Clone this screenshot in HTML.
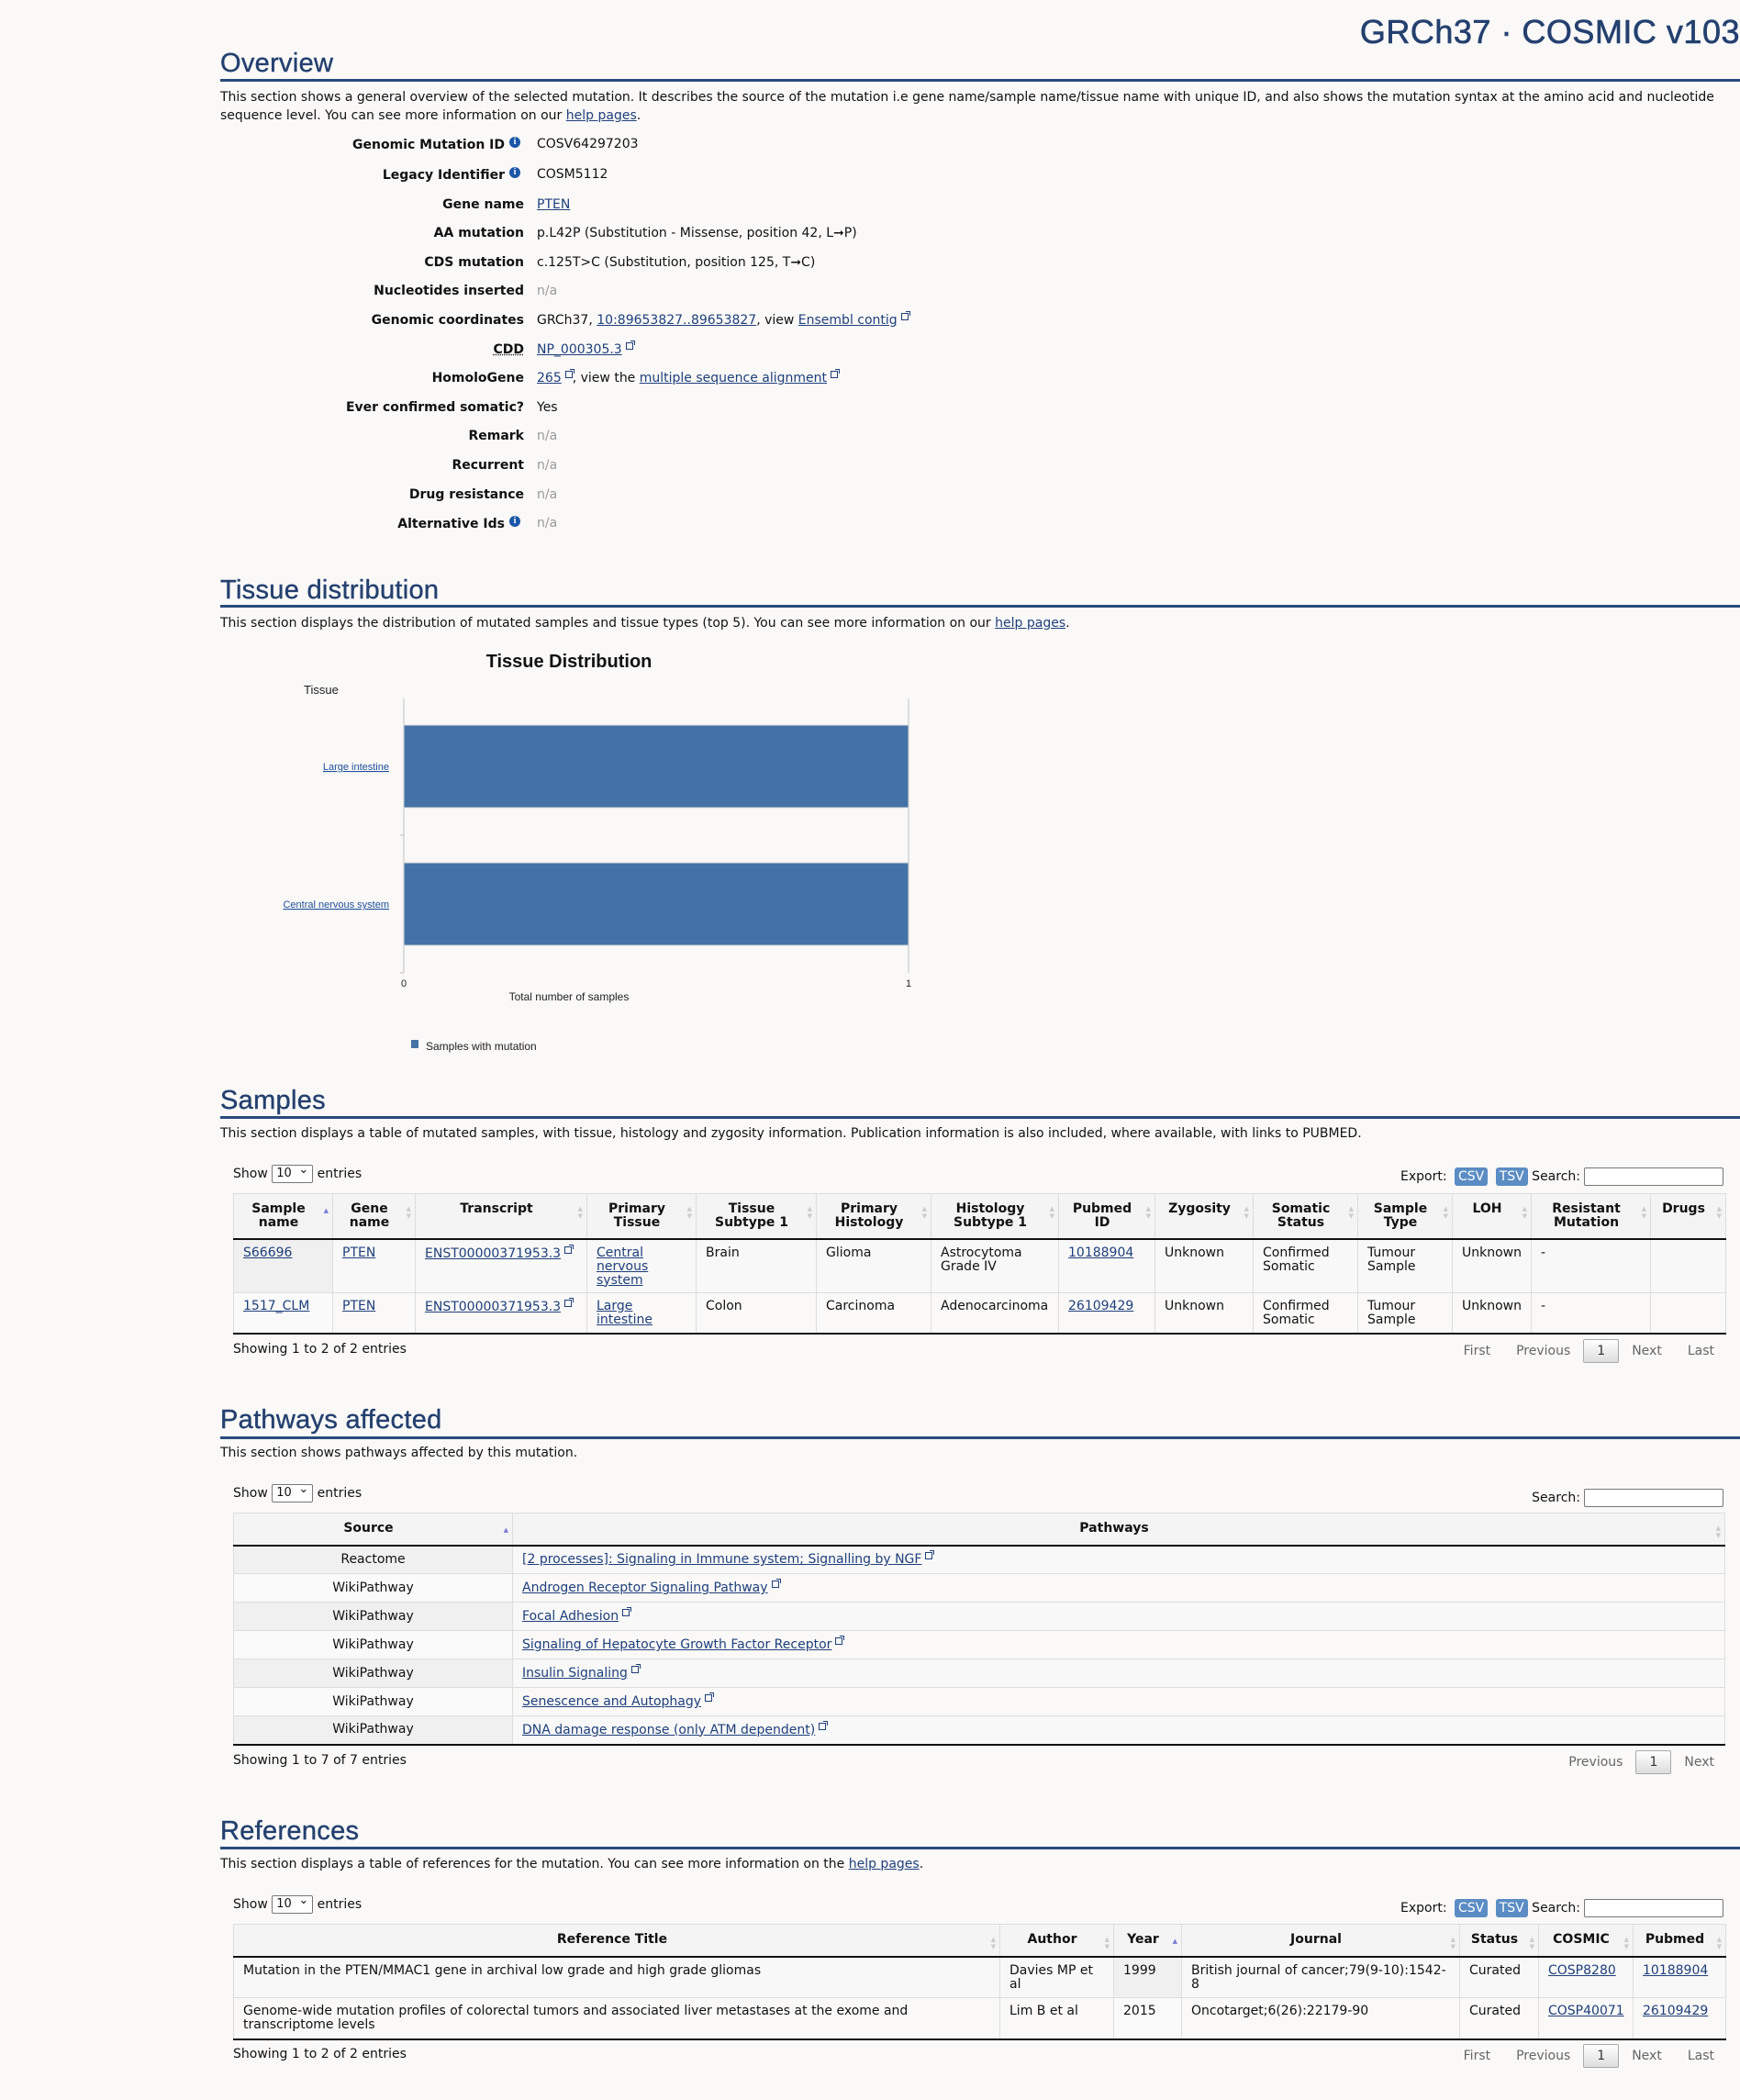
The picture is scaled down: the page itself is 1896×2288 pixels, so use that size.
<!DOCTYPE html>
<html><head><meta charset="utf-8">
<style>
*{box-sizing:border-box}
body{margin:0;width:1896px;height:2288px;background:#faf9f8;font-family:Verdana,"DejaVu Sans",sans-serif;font-size:14px;color:#111;position:relative;overflow:hidden}
.a{position:absolute}
a{color:#1f3f7a;text-decoration:underline}
h2{position:absolute;left:240px;margin:0;font-family:"Liberation Sans",sans-serif;font-weight:normal;font-size:29px;color:#24406f;letter-spacing:0.3px;-webkit-text-stroke:0.4px #24406f}
.rule{position:absolute;left:240px;right:0;height:3px;background:#2a4a7c}
.p{position:absolute;left:240px;width:1645px;line-height:20px}
.lbl{position:absolute;right:1325px;font-weight:bold;text-align:right;white-space:nowrap}
.val{position:absolute;left:585px;white-space:nowrap}
.na{color:#999}
.i{display:inline-block;width:12px;height:12px;border-radius:50%;background:#1a56a8;color:#fff;font-size:10px;line-height:12px;text-align:center;font-weight:bold;vertical-align:5px;margin-left:5px;margin-right:4px;font-family:"Liberation Serif",serif}
.ext{display:inline-block;width:8px;height:8px;border:1.2px solid #1f3f7a;vertical-align:text-top;margin-left:4px;position:relative}
.ext:after{content:"";position:absolute;right:-3px;top:-3px;width:4px;height:4px;border-top:1.4px solid #1f3f7a;border-right:1.4px solid #1f3f7a}
table{position:absolute;border-collapse:collapse;table-layout:fixed;left:254px;width:1626px;font-size:14px}
th{font-weight:bold;background:#f4f4f4;border:1px solid #ddd;border-bottom:2px solid #111;padding:9px 18px 4px 8px;line-height:15px;vertical-align:top;position:relative;text-align:center}
th:after{content:"▲\A▼";white-space:pre;position:absolute;right:4px;top:12px;font-size:7px;line-height:8px;color:#ccc}
th.asc:after{content:"▲";color:#7a7ad8;top:14px}
td{border:1px solid #ddd;padding:7px 10px 4px;vertical-align:top;line-height:15px}
tr.o td{background:#f8f8f8}
tr.o td.s{background:#f0f0f0}
td.s{background:#fafafa}
tbody tr:last-child td{border-bottom:2px solid #111}
.pw th{vertical-align:middle;padding:4px 18px 4px 8px}
.pw td{vertical-align:middle;padding:0 10px;height:31px}
.show{position:absolute;left:254px;white-space:nowrap}
.show span.sel{display:inline-block;border:1px solid #777;border-radius:2px;width:45px;height:20px;font-size:13px;line-height:18px;padding-left:4px;background:#fff;vertical-align:middle;position:relative}
.show span.sel:after{content:"⌄";position:absolute;right:4px;top:-4px;font-size:13px}
.srch{position:absolute;right:18px;white-space:nowrap}
.srch .box{display:inline-block;width:152px;height:20px;border:1px solid #777;border-radius:2px;background:#fff;vertical-align:middle;margin-left:4px}
.btn{display:inline-block;background:#5b8cc4;color:#fff;padding:2px 4px;border-radius:3px;margin-left:4px;line-height:16px}
.pag{position:absolute;right:14px;color:#666;white-space:nowrap}
.pag span{display:inline-block;padding:0 14px}
.pag .cur{border:1px solid #aaa;background:linear-gradient(#fff,#ddd);border-radius:2px;padding:4px 14px;color:#333}
</style></head><body>

<div class="a" style="right:0;top:14px;font-family:'Liberation Sans',sans-serif;font-size:36px;color:#24406f;white-space:nowrap;letter-spacing:0.5px;-webkit-text-stroke:0.6px #24406f">GRCh37 · COSMIC v103</div>

<h2 style="top:53px">Overview</h2>
<div class="rule" style="top:86px"></div>
<div class="p" style="top:96px">This section shows a general overview of the selected mutation. It describes the source of the mutation i.e gene name/sample name/tissue name with unique ID, and also shows the mutation syntax at the amino acid and nucleotide sequence level. You can see more information on our <a>help pages</a>.</div>

<div class="lbl" style="top:149px">Genomic Mutation ID<span class="i">i</span></div><div class="val" style="top:149px">COSV64297203</div>
<div class="lbl" style="top:182px">Legacy Identifier<span class="i">i</span></div><div class="val" style="top:182px">COSM5112</div>
<div class="lbl" style="top:215px">Gene name</div><div class="val" style="top:215px"><a>PTEN</a></div>
<div class="lbl" style="top:246px">AA mutation</div><div class="val" style="top:246px">p.L42P (Substitution - Missense, position 42, L➞P)</div>
<div class="lbl" style="top:278px">CDS mutation</div><div class="val" style="top:278px">c.125T&gt;C (Substitution, position 125, T➞C)</div>
<div class="lbl" style="top:309px">Nucleotides inserted</div><div class="val na" style="top:309px">n/a</div>
<div class="lbl" style="top:341px">Genomic coordinates</div><div class="val" style="top:341px">GRCh37, <a>10:89653827..89653827</a>, view <a>Ensembl contig</a><span class="ext"></span></div>
<div class="lbl" style="top:373px;text-decoration:underline dotted">CDD</div><div class="val" style="top:373px"><a>NP_000305.3</a><span class="ext"></span></div>
<div class="lbl" style="top:404px">HomoloGene</div><div class="val" style="top:404px"><a>265</a><span class="ext"></span>, view the <a>multiple sequence alignment</a><span class="ext"></span></div>
<div class="lbl" style="top:436px">Ever confirmed somatic?</div><div class="val" style="top:436px">Yes</div>
<div class="lbl" style="top:467px">Remark</div><div class="val na" style="top:467px">n/a</div>
<div class="lbl" style="top:499px">Recurrent</div><div class="val na" style="top:499px">n/a</div>
<div class="lbl" style="top:531px">Drug resistance</div><div class="val na" style="top:531px">n/a</div>
<div class="lbl" style="top:562px">Alternative Ids<span class="i">i</span></div><div class="val na" style="top:562px">n/a</div>

<h2 style="top:627px">Tissue distribution</h2>
<div class="rule" style="top:659px"></div>
<div class="p" style="top:669px">This section displays the distribution of mutated samples and tissue types (top 5). You can see more information on our <a>help pages</a>.</div>

<svg class="a" style="left:0;top:0" width="1100" height="1180" font-family="Liberation Sans, Arial, sans-serif">
<text x="620" y="727" font-size="20" font-weight="bold" text-anchor="middle" fill="#111">Tissue Distribution</text>
<text x="331" y="756" font-size="13" fill="#222">Tissue</text>
<line x1="440" y1="761" x2="440" y2="1060" stroke="#ddd" stroke-width="2"/>
<line x1="990" y1="761" x2="990" y2="1060" stroke="#ddd" stroke-width="2"/>
<line x1="436" y1="910" x2="440" y2="910" stroke="#bbb"/>
<line x1="436" y1="1060" x2="440" y2="1060" stroke="#bbb"/>
<rect x="440" y="790" width="550" height="90" fill="#4472a6" stroke="#ddd"/>
<rect x="440" y="940" width="550" height="90" fill="#4472a6" stroke="#ddd"/>
<text x="424" y="839" font-size="11" fill="#1f4f9a" text-anchor="end" text-decoration="underline">Large intestine</text>
<text x="424" y="989" font-size="11" fill="#1f4f9a" text-anchor="end" text-decoration="underline">Central nervous system</text>
<text x="440" y="1075" font-size="11" text-anchor="middle" fill="#222">0</text>
<text x="990" y="1075" font-size="11" text-anchor="middle" fill="#222">1</text>
<text x="620" y="1090" font-size="12" text-anchor="middle" fill="#222">Total number of samples</text>
<rect x="448" y="1133" width="8" height="9" fill="#4472a6"/>
<text x="464" y="1144" font-size="12" fill="#222">Samples with mutation</text>
</svg>

<h2 style="top:1183px">Samples</h2>
<div class="rule" style="top:1216px"></div>
<div class="p" style="top:1225px">This section displays a table of mutated samples, with tissue, histology and zygosity information. Publication information is also included, where available, with links to PUBMED.</div>

<div class="show" style="top:1269px">Show <span class="sel">10</span> entries</div>
<div class="srch" style="top:1272px">Export: <span class="btn">CSV</span> <span class="btn">TSV</span> Search:<span class="box"></span></div>
<table style="top:1300px">
<colgroup><col style="width:108px"><col style="width:90px"><col style="width:187px"><col style="width:119px"><col style="width:131px"><col style="width:125px"><col style="width:139px"><col style="width:105px"><col style="width:107px"><col style="width:114px"><col style="width:103px"><col style="width:86px"><col style="width:130px"><col style="width:82px"></colgroup>
<thead><tr style="height:49px"><th class="asc">Sample name</th><th>Gene name</th><th>Transcript</th><th>Primary Tissue</th><th>Tissue Subtype 1</th><th>Primary Histology</th><th>Histology Subtype 1</th><th>Pubmed ID</th><th>Zygosity</th><th>Somatic Status</th><th>Sample Type</th><th>LOH</th><th>Resistant Mutation</th><th>Drugs</th></tr></thead>
<tbody>
<tr class="o" style="height:59px"><td class="s"><a>S66696</a></td><td><a>PTEN</a></td><td><a>ENST00000371953.3</a><span class="ext"></span></td><td><a>Central nervous system</a></td><td>Brain</td><td>Glioma</td><td>Astrocytoma Grade IV</td><td><a>10188904</a></td><td>Unknown</td><td>Confirmed Somatic</td><td>Tumour Sample</td><td>Unknown</td><td>-</td><td></td></tr>
<tr style="height:44px"><td class="s"><a>1517_CLM</a></td><td><a>PTEN</a></td><td><a>ENST00000371953.3</a><span class="ext"></span></td><td><a>Large intestine</a></td><td>Colon</td><td>Carcinoma</td><td>Adenocarcinoma</td><td><a>26109429</a></td><td>Unknown</td><td>Confirmed Somatic</td><td>Tumour Sample</td><td>Unknown</td><td>-</td><td></td></tr>
</tbody></table>
<div class="show" style="top:1462px">Showing 1 to 2 of 2 entries</div>
<div class="pag" style="top:1459px"><span>First</span><span>Previous</span><span class="cur">1</span><span>Next</span><span>Last</span></div>

<h2 style="top:1531px">Pathways affected</h2>
<div class="rule" style="top:1565px"></div>
<div class="p" style="top:1573px">This section shows pathways affected by this mutation.</div>
<div class="show" style="top:1617px">Show <span class="sel">10</span> entries</div>
<div class="srch" style="top:1622px">Search:<span class="box"></span></div>
<table class="pw" style="top:1648px">
<colgroup><col style="width:304px"><col></colgroup>
<thead><tr style="height:35px"><th class="asc">Source</th><th>Pathways</th></tr></thead>
<tbody>
<tr class="o"><td class="s" style="text-align:center">Reactome</td><td><a>[2 processes]: Signaling in Immune system; Signalling by NGF</a><span class="ext"></span></td></tr>
<tr><td class="s" style="text-align:center">WikiPathway</td><td><a>Androgen Receptor Signaling Pathway</a><span class="ext"></span></td></tr>
<tr class="o"><td class="s" style="text-align:center">WikiPathway</td><td><a>Focal Adhesion</a><span class="ext"></span></td></tr>
<tr><td class="s" style="text-align:center">WikiPathway</td><td><a>Signaling of Hepatocyte Growth Factor Receptor</a><span class="ext"></span></td></tr>
<tr class="o"><td class="s" style="text-align:center">WikiPathway</td><td><a>Insulin Signaling</a><span class="ext"></span></td></tr>
<tr><td class="s" style="text-align:center">WikiPathway</td><td><a>Senescence and Autophagy</a><span class="ext"></span></td></tr>
<tr class="o"><td class="s" style="text-align:center">WikiPathway</td><td><a>DNA damage response (only ATM dependent)</a><span class="ext"></span></td></tr>
</tbody></table>
<div class="show" style="top:1910px">Showing 1 to 7 of 7 entries</div>
<div class="pag" style="top:1907px"><span>Previous</span><span class="cur">1</span><span>Next</span></div>

<h2 style="top:1979px">References</h2>
<div class="rule" style="top:2012px"></div>
<div class="p" style="top:2021px">This section displays a table of references for the mutation. You can see more information on the <a>help pages</a>.</div>
<div class="show" style="top:2065px">Show <span class="sel">10</span> entries</div>
<div class="srch" style="top:2069px">Export: <span class="btn">CSV</span> <span class="btn">TSV</span> Search:<span class="box"></span></div>
<table style="top:2096px">
<colgroup><col style="width:835px"><col style="width:124px"><col style="width:74px"><col style="width:303px"><col style="width:86px"><col style="width:103px"><col style="width:101px"></colgroup>
<thead><tr style="height:35px"><th>Reference Title</th><th>Author</th><th class="asc">Year</th><th>Journal</th><th>Status</th><th>COSMIC</th><th>Pubmed</th></tr></thead>
<tbody>
<tr class="o" style="height:45px"><td>Mutation in the PTEN/MMAC1 gene in archival low grade and high grade gliomas</td><td>Davies MP et al</td><td class="s">1999</td><td>British journal of cancer;79(9-10):1542-8</td><td>Curated</td><td><a>COSP8280</a></td><td><a>10188904</a></td></tr>
<tr style="height:45px"><td>Genome-wide mutation profiles of colorectal tumors and associated liver metastases at the exome and transcriptome levels</td><td>Lim B et al</td><td class="s">2015</td><td>Oncotarget;6(26):22179-90</td><td>Curated</td><td><a>COSP40071</a></td><td><a>26109429</a></td></tr>
</tbody></table>
<div class="show" style="top:2230px">Showing 1 to 2 of 2 entries</div>
<div class="pag" style="top:2227px"><span>First</span><span>Previous</span><span class="cur">1</span><span>Next</span><span>Last</span></div>

</body></html>
